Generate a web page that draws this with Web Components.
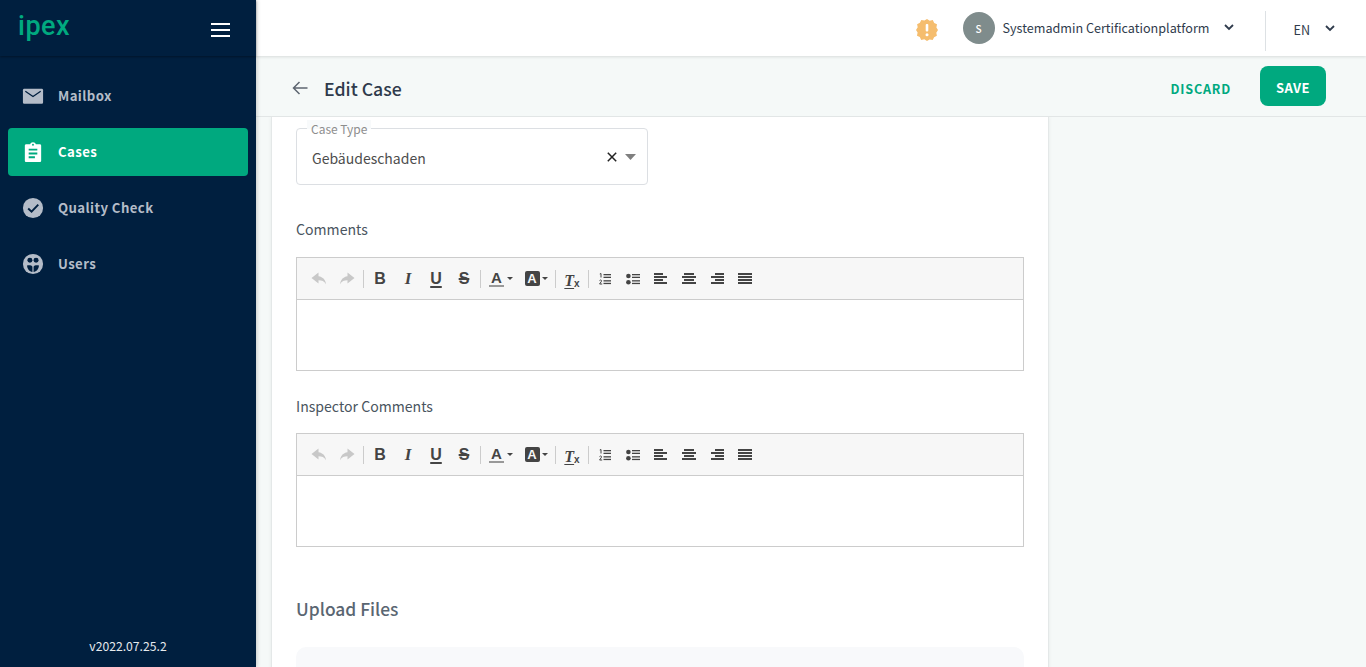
<!DOCTYPE html>
<html lang="en"><head><meta charset="utf-8"><title>Edit Case</title>
<style>
html,body{margin:0;height:667px;overflow:hidden;font-family:"Noto Sans CJK JP","Noto Sans",sans-serif;background:#f5f9f8}
</style></head><body>
<app-shell>
  <side-nav slot="nav">
    <nav-item icon="mail">Mailbox</nav-item>
    <nav-item icon="clip" active>Cases</nav-item>
    <nav-item icon="check">Quality Check</nav-item>
    <nav-item icon="users">Users</nav-item>
  </side-nav>
  <top-bar slot="top"></top-bar>
  <page-header slot="header" title="Edit Case"></page-header>
  <case-card>
    <case-select label="Case Type" value="Gebäudeschaden"></case-select>
    <rich-editor label="Comments" style="margin-top:33px;--lab-gap:17px"></rich-editor>
    <rich-editor label="Inspector Comments" style="margin-top:24px;--lab-gap:16px"></rich-editor>
    <upload-files></upload-files>
  </case-card>
</app-shell>
<script>
function el(name, html){
  customElements.define(name, class extends HTMLElement{
    constructor(){super();this.attachShadow({mode:'open'}).innerHTML=typeof html==='function'?html(this):html;}
  });
}
const ICONS={
 mail:'<path d="M3.600 5h17.800c1 0 1.600.6 1.600 1.500V19c0 1-.7 1.600-1.600 1.600H3.600C2.700 20.600 2 20 2 19V6.500C2 5.600 2.600 5 3.600 5z" fill="currentColor"/><path d="M4.500 7.500 12.500 13 20.500 7.500" fill="none" stroke="#001f3f" stroke-width="1.300"/>',
 clip:'<path d="M5.500 4.500H9.500C9.900 3.200 11 2.300 12.500 2.300S15.100 3.200 15.500 4.500H19.500C20.400 4.500 21 5.100 21 6V21.500C21 22.400 20.400 23 19.500 23H5.500C4.600 23 4 22.400 4 21.500V6C4 5.100 4.600 4.500 5.500 4.500Z" fill="currentColor"/><path d="M8 10h9M8 14h9M8 18h6.500" stroke="VAR" stroke-width="2"/><circle cx="12.500" cy="5" r="1" fill="VAR"/>',
 check:'<circle cx="12.500" cy="12.500" r="10.500" fill="currentColor"/><path d="M7.500 13 11 16.300 18 9" fill="none" stroke="#001f3f" stroke-width="2"/>',
 users:'<circle cx="12.500" cy="12.500" r="10.500" fill="currentColor"/><circle cx="9.300" cy="8.600" r="2.600" fill="#001f3f"/><circle cx="15.700" cy="8.600" r="2.600" fill="#001f3f"/><path d="M6.300 14c1.800-.6 5-.4 5.600 1.300v5.500c-3-.4-5.400-3.300-5.600-6.800zM18.700 14c-1.800-.6-5-.4-5.600 1.300v5.500c3-.4 5.400-3.300 5.600-6.800z" fill="#001f3f"/>'
};
el('app-shell',`<style>
:host{display:flex;width:1366px;height:667px;overflow:hidden}
.nav{flex:0 0 256px;position:relative;z-index:3}
.main{flex:1;display:flex;flex-direction:column;min-width:0}
.body{flex:1;min-height:0;overflow:hidden;padding-left:15px}
</style><div class="nav"><slot name="nav"></slot></div>
<div class="main"><slot name="top"></slot><slot name="header"></slot><div class="body"><slot></slot></div></div>`);
el('side-nav',`<style>
:host{display:flex;flex-direction:column;height:667px;background:#001f3f;color:#fff;box-shadow:1px 0 4px rgba(0,0,0,.2)}
.head{height:56px;flex:none;display:flex;align-items:center;justify-content:space-between;padding:0 26px 0 18px;box-shadow:0 1px 2px rgba(0,0,0,.35);box-sizing:border-box}
.logo{font:500 27px/1 Roboto,sans-serif;color:#00a97f;letter-spacing:.5px;margin-bottom:4px}
.menu{width:19px;height:14px;display:flex;flex-direction:column;justify-content:space-between;margin-top:4px}
.menu i{display:block;height:2px;background:#fff}
nav{display:flex;flex-direction:column;gap:8px;padding:16px 8px 0;flex:1}
.ver{font-size:12.2px;line-height:18px;text-align:center;color:#e6eaee;padding-bottom:12px}
</style><div class="head"><span class="logo">ipex</span><span class="menu"><i></i><i></i><i></i></span></div>
<nav><slot></slot></nav><div class="ver">v2022.07.25.2</div>`);
el('nav-item',h=>{const a=h.hasAttribute('active');const ic=ICONS[h.getAttribute('icon')].replace(/VAR/g,'#00a97f');return `<style>
:host{display:flex;align-items:center;height:48px;border-radius:4px;padding-left:13px;gap:13px;font-size:13.2px;font-weight:700;letter-spacing:.4px;color:${a?'#fff':'#b4bcc8'};background:${a?'#00a97f':'transparent'}}
svg{width:24px;height:24px;flex:none}
span{margin-bottom:2px}
</style><svg viewBox="0 0 25 25">${ic}</svg><span><slot></slot></span>`});
el('top-bar',`<style>
:host{display:flex;align-items:center;height:56px;flex:none;background:#fff;box-shadow:0 1px 3px rgba(0,0,0,.12);position:relative;z-index:2;color:#2f3b4c;justify-content:flex-end;box-sizing:border-box}
.warn{width:22px;height:22px;margin:4px 25px 0 0}
.av{width:32px;height:32px;border-radius:50%;background:#7f8c8c;color:#fff;font-size:10px;font-weight:500;display:flex;align-items:center;justify-content:center;margin-right:8px}
.name{font-size:12.6px;line-height:20px;margin-right:14px}
.chev{width:12px;height:8px;flex:none}
.div{width:1px;height:40px;background:#dde1e4;margin:6px 27px 0 30px}
.en{font-size:12.6px;margin:2px 14px 0 0}
.r{margin-right:30px}
.c{margin-bottom:2px}
</style>
<svg class="warn" viewBox="0 0 22 22"><path fill="#f5bd6e" d="M11 0l2.700 1.700 3.100-.6 1.400 2.800 2.800 1.400-.6 3.100L22 11l-1.700 2.700.6 3.100-2.800 1.400-1.400 2.800-3.100-.6L11 22l-2.700-1.700-3.100.6-1.400-2.800-2.800-1.400.6-3.100L0 11l1.700-2.700-.6-3.100 2.800-1.400 1.400-2.800 3.100.6z"/><rect x="9.700" y="5" width="2.600" height="7.500" rx="1" fill="#fff"/><circle cx="11" cy="15.800" r="1.500" fill="#fff"/></svg>
<span class="av">S</span><span class="name">Systemadmin Certificationplatform</span>
<svg class="chev c" viewBox="0 0 12 8"><path d="M2 2l4 4 4-4" fill="none" stroke="#2f3b4c" stroke-width="1.800"/></svg>
<span class="div"></span><span class="en">EN</span>
<svg class="chev r" viewBox="0 0 12 8"><path d="M2 2l4 4 4-4" fill="none" stroke="#2f3b4c" stroke-width="1.800"/></svg>`);
el('page-header',h=>`<style>
:host{display:flex;align-items:center;height:61px;flex:none;box-sizing:border-box;background:#f5f9f8;border-bottom:1px solid #e2e6e6;padding:0 40px 0 36px;position:relative;z-index:1}
svg{width:16px;height:14px;margin:4px 16px 0 0}
h1{font-size:17.700px;font-weight:500;line-height:28px;margin:3px 0 0;flex:1;color:#2f3b4c}
.d{font-size:12.600px;font-weight:700;letter-spacing:.8px;color:#00a97f;margin:4px 29px 0 0}
.s{width:66px;height:40px;box-sizing:border-box;padding-top:3px;border-radius:8px;background:#00a97f;color:#fff;font-size:13px;font-weight:700;display:flex;align-items:center;justify-content:center;letter-spacing:.5px}
</style><svg viewBox="0 0 16 14"><path d="M15.500 7H1.500M7.500 1 1.500 7l6 6" fill="none" stroke="#5d6670" stroke-width="1.500"/></svg>
<h1>${h.getAttribute('title')}</h1><span class="d">DISCARD</span><span class="s">SAVE</span>`);
el('case-card',`<style>
:host{display:block;width:778px;height:560px;background:#fff;box-sizing:border-box;border-left:1px solid #e4e8e8;border-right:1px solid #e4e8e8;padding:11px 24px 0;box-shadow:0 0 4px rgba(0,0,0,.06);overflow:hidden}
</style><slot></slot>`);
el('case-select',h=>`<style>
:host{display:block;width:352px;height:57px;box-sizing:border-box;border:1px solid #dcdfe3;border-radius:4px;position:relative;color:#4d4d4d}
.l{position:absolute;left:10px;top:-9px;padding:0 4px;height:18px;font-size:12px;line-height:18px;color:#8d8d8d;background:linear-gradient(#f8fafb 50%,#fff 50%)}
.row{display:flex;align-items:center;height:100%;box-sizing:border-box;padding:2px 11px 0 15px;font-size:14px}
.v{flex:1}
svg{flex:none}
</style><span class="l">${h.getAttribute('label')}</span>
<div class="row"><span class="v">${h.getAttribute('value')}</span>
<svg width="10" height="10" viewBox="0 0 10 10" style="margin:0 8px 2px 0"><path d="M.8.800l8.400 8.400M9.200.800.800 9.200" stroke="#222" stroke-width="1.500"/></svg>
<svg width="11" height="6" viewBox="0 0 11 6" style="margin-bottom:2px"><path d="M0 0h11L5.500 6z" fill="#7f7f7f"/></svg></div>`);
const T='#444';
const lines=(w)=>`<svg width="14" height="11" viewBox="0 0 14 11">${w.map((r,i)=>`<rect x="${r[0]}" y="${i*3}" width="${r[1]}" height="2" fill="${T}"/>`).join('')}</svg>`;
el('rich-editor',h=>`<style>
:host{display:block;width:728px;color:#4a5560}
.lab{font-size:14.100px;line-height:22px;margin-bottom:var(--lab-gap,16px);color:#4a5560}
.box{border:1px solid #ccc;height:114px;box-sizing:border-box;display:flex;flex-direction:column}
.bar{height:41px;flex:none;background:#f7f7f7;border-bottom:1px solid #ccc;display:flex;align-items:center;padding-left:8px}
.b{width:28px;height:24px;display:flex;align-items:center;justify-content:center;flex:none;color:${T};font:700 16px/24px "Liberation Sans",sans-serif}
.sep{width:1px;height:18px;background:#ccc;flex:none;margin:0 2px}
.ed{flex:1;background:#fff}
.i{font:italic 700 17px/24px "Liberation Serif",serif}
.u{text-decoration:underline;text-underline-offset:2px;text-decoration-thickness:1.500px}
.st{text-decoration:line-through;text-decoration-thickness:1.500px}
.col{width:36px;gap:3px}
.a{display:inline-block;border-bottom:2px solid #999;line-height:15px;height:15px;padding:0 2px;font-size:15px}
.bg{display:inline-block;background:#444;color:#f7f7f7;width:15px;height:15px;border-radius:2px;line-height:15px;text-align:center;font-size:13px}
.car{width:0;height:0;border:3px solid transparent;border-top-color:${T};border-bottom:0}
.tx{align-items:flex-end;padding-bottom:1px;box-sizing:border-box}
.tx .t{font:italic 700 16px/18px "Liberation Serif",serif;text-decoration:underline;text-underline-offset:2px}
.tx small{font:700 10px/11px "Liberation Sans",sans-serif;margin-bottom:1px}
</style><div class="lab">${h.getAttribute('label')}</div><div class="box"><div class="bar">
<span class="b"><svg width="16" height="13" viewBox="0 0 16 13"><path d="M7.500.500.500 6l7 5.500V8.300c3.300 0 5.700.8 7.500 4-.5-4.500-3-7.300-7.500-8z" fill="#c8c8c8"/></svg></span>
<span class="b"><svg width="16" height="13" viewBox="0 0 16 13"><path d="M8.500.500l7 5.500-7 5.500V8.300c-3.300 0-5.700.8-7.500 4 .5-4.500 3-7.300 7.500-8z" fill="#c8c8c8"/></svg></span>
<span class="sep"></span>
<span class="b">B</span><span class="b i">I</span><span class="b"><span class="u">U</span></span><span class="b"><span class="st">S</span></span>
<span class="sep"></span>
<span class="b col"><span class="a">A</span><span class="car"></span></span>
<span class="b" style="width:34px;gap:2px"><span class="bg">A</span><span class="car"></span></span>
<span class="sep"></span>
<span class="b tx"><span class="t">T</span><small>x</small></span>
<span class="sep"></span>
<span class="b"><svg width="12" height="12" viewBox="0 0 12 12"><path d="M.8 1 2 .5V4.500M.5 7.600c.8-1 2.400-.7 2 .6L.6 11h2.600" fill="none" stroke="${T}" stroke-width="1"/><rect x="4.500" y="1" width="7.500" height="1.300" fill="${T}"/><rect x="4.500" y="3.700" width="7.500" height="1.300" fill="${T}"/><rect x="4.500" y="7.200" width="7.500" height="1.300" fill="${T}"/><rect x="4.500" y="9.800" width="7.500" height="1.300" fill="${T}"/></svg></span>
<span class="b"><svg width="14" height="12" viewBox="0 0 14 12"><circle cx="2.400" cy="3" r="2.300" fill="${T}"/><circle cx="2.400" cy="9.300" r="2.300" fill="${T}"/><rect x="6" y="1" width="8" height="1.300" fill="${T}"/><rect x="6" y="3.700" width="8" height="1.300" fill="${T}"/><rect x="6" y="7.200" width="8" height="1.300" fill="${T}"/><rect x="6" y="9.800" width="8" height="1.300" fill="${T}"/></svg></span>
<span class="b">${lines([[0,9],[0,13],[0,9],[0,13]])}</span>
<span class="b">${lines([[2,10],[0,14],[2,10],[0,14]])}</span>
<span class="b">${lines([[5,9],[1,13],[5,9],[1,13]])}</span>
<span class="b">${lines([[0,14],[0,14],[0,14],[0,14]])}</span>
</div><div class="ed"></div></div>`);
el('upload-files',`<style>
:host{display:block;width:728px}
h2{font-size:17.400px;font-weight:500;line-height:26px;margin:49px 0 25px;color:#5a6672}
.d{height:120px;background:#f8f9fb;border-radius:10px}
</style><h2>Upload Files</h2><div class="d"></div>`);
</script>
</body></html>
